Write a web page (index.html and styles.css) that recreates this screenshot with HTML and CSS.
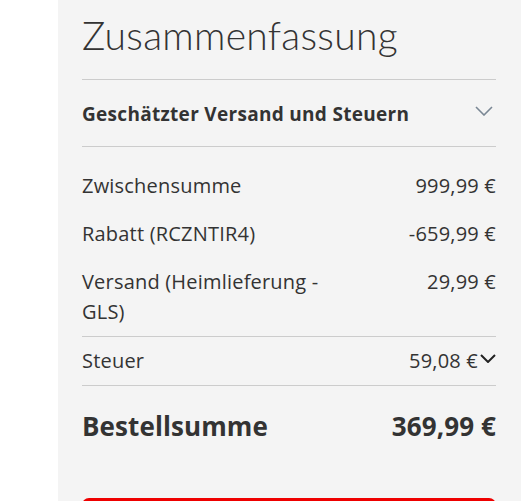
FILE: index.html
```html
<!DOCTYPE html>
<html lang="de">
<head>
<meta charset="utf-8">
<link rel="stylesheet" href="styles.css">
</head>
<body>
<aside class="summary">
  <h1 class="title">Zusammenfassung</h1>
  <div class="estimate">
    <span class="estimate-label">Geschätzter Versand und Steuern</span>
    <svg class="chev-light" width="18" height="10" viewBox="0 0 18 10"><path d="M1 1 L9 9 L17 1" fill="none" stroke="#7a8794" stroke-width="1.6"/></svg>
  </div>
  <div class="totals">
    <div class="row"><span class="label">Zwischensumme</span><span class="value">999,99 €</span></div>
    <div class="row"><span class="label">Rabatt (RCZNTIR4)</span><span class="value">-659,99 €</span></div>
    <div class="row"><span class="label wrap">Versand (Heimlieferung - GLS)</span><span class="value">29,99 €</span></div>
  </div>
  <div class="tax">
    <div class="row"><span class="label">Steuer</span><span class="value">59,08 €<svg class="chev-dark" width="16" height="9" viewBox="0 0 16 9"><path d="M1 1 L8 8 L15 1" fill="none" stroke="#222" stroke-width="2"/></svg></span></div>
  </div>
  <div class="grand">
    <span class="grand-label">Bestellsumme</span><span class="grand-value">369,99 €</span>
  </div>
  <button class="checkout" type="button"></button>
</aside>
</body>
</html>
```
FILE: styles.css
```css
html, body {
  margin: 0;
  padding: 0;
  background: #ffffff;
  height: 501px;
  overflow: hidden;
}
body {
  font-family: "Open Sans", Lato, sans-serif;
  color: #333333;
}
.summary {
  margin-left: 58px;
  width: 463px;
  height: 501px;
  overflow: hidden;
  box-sizing: border-box;
  padding: 0 25px 0 24px;
  background: #f4f4f4;
}
.title {
  margin: 0;
  padding-top: 11px;
  height: 79px;
  box-sizing: border-box;
  font-family: Lato, "Open Sans", sans-serif;
  font-size: 39px;
  font-weight: 300;
  line-height: 48px;
  letter-spacing: 0.3px;
}
.estimate {
  border-top: 1px solid #cccccc;
  border-bottom: 1px solid #cccccc;
  height: 66px;
  display: flex;
  align-items: center;
  justify-content: space-between;
}
.estimate-label {
  font-size: 19px;
  font-weight: 700;
  letter-spacing: 0.3px;
  padding-top: 1px;
}
.chev-light {
  margin-right: 3px;
  margin-top: -4px;
}
.totals {
  padding: 15px 0 0;
  border-bottom: 1px solid #cccccc;
}
.row {
  display: flex;
  justify-content: space-between;
  align-items: flex-start;
  padding: 9px 0;
  font-size: 20px;
  line-height: 30px;
  letter-spacing: 0.2px;
}
.label.wrap {
  max-width: 260px;
}
.value {
  display: flex;
  align-items: center;
}
.chev-dark {
  margin-left: 2px;
  margin-top: -6px;
}
.tax {
  border-bottom: 1px solid #cccccc;
}
.grand {
  display: flex;
  justify-content: space-between;
  padding-top: 22px;
  font-size: 26px;
  font-weight: 700;
  line-height: 36px;
  letter-spacing: 0.1px;
}
.checkout {
  display: block;
  width: 100%;
  height: 50px;
  margin-top: 54px;
  border: none;
  border-radius: 7px;
  background: #ee0000;
}
```
